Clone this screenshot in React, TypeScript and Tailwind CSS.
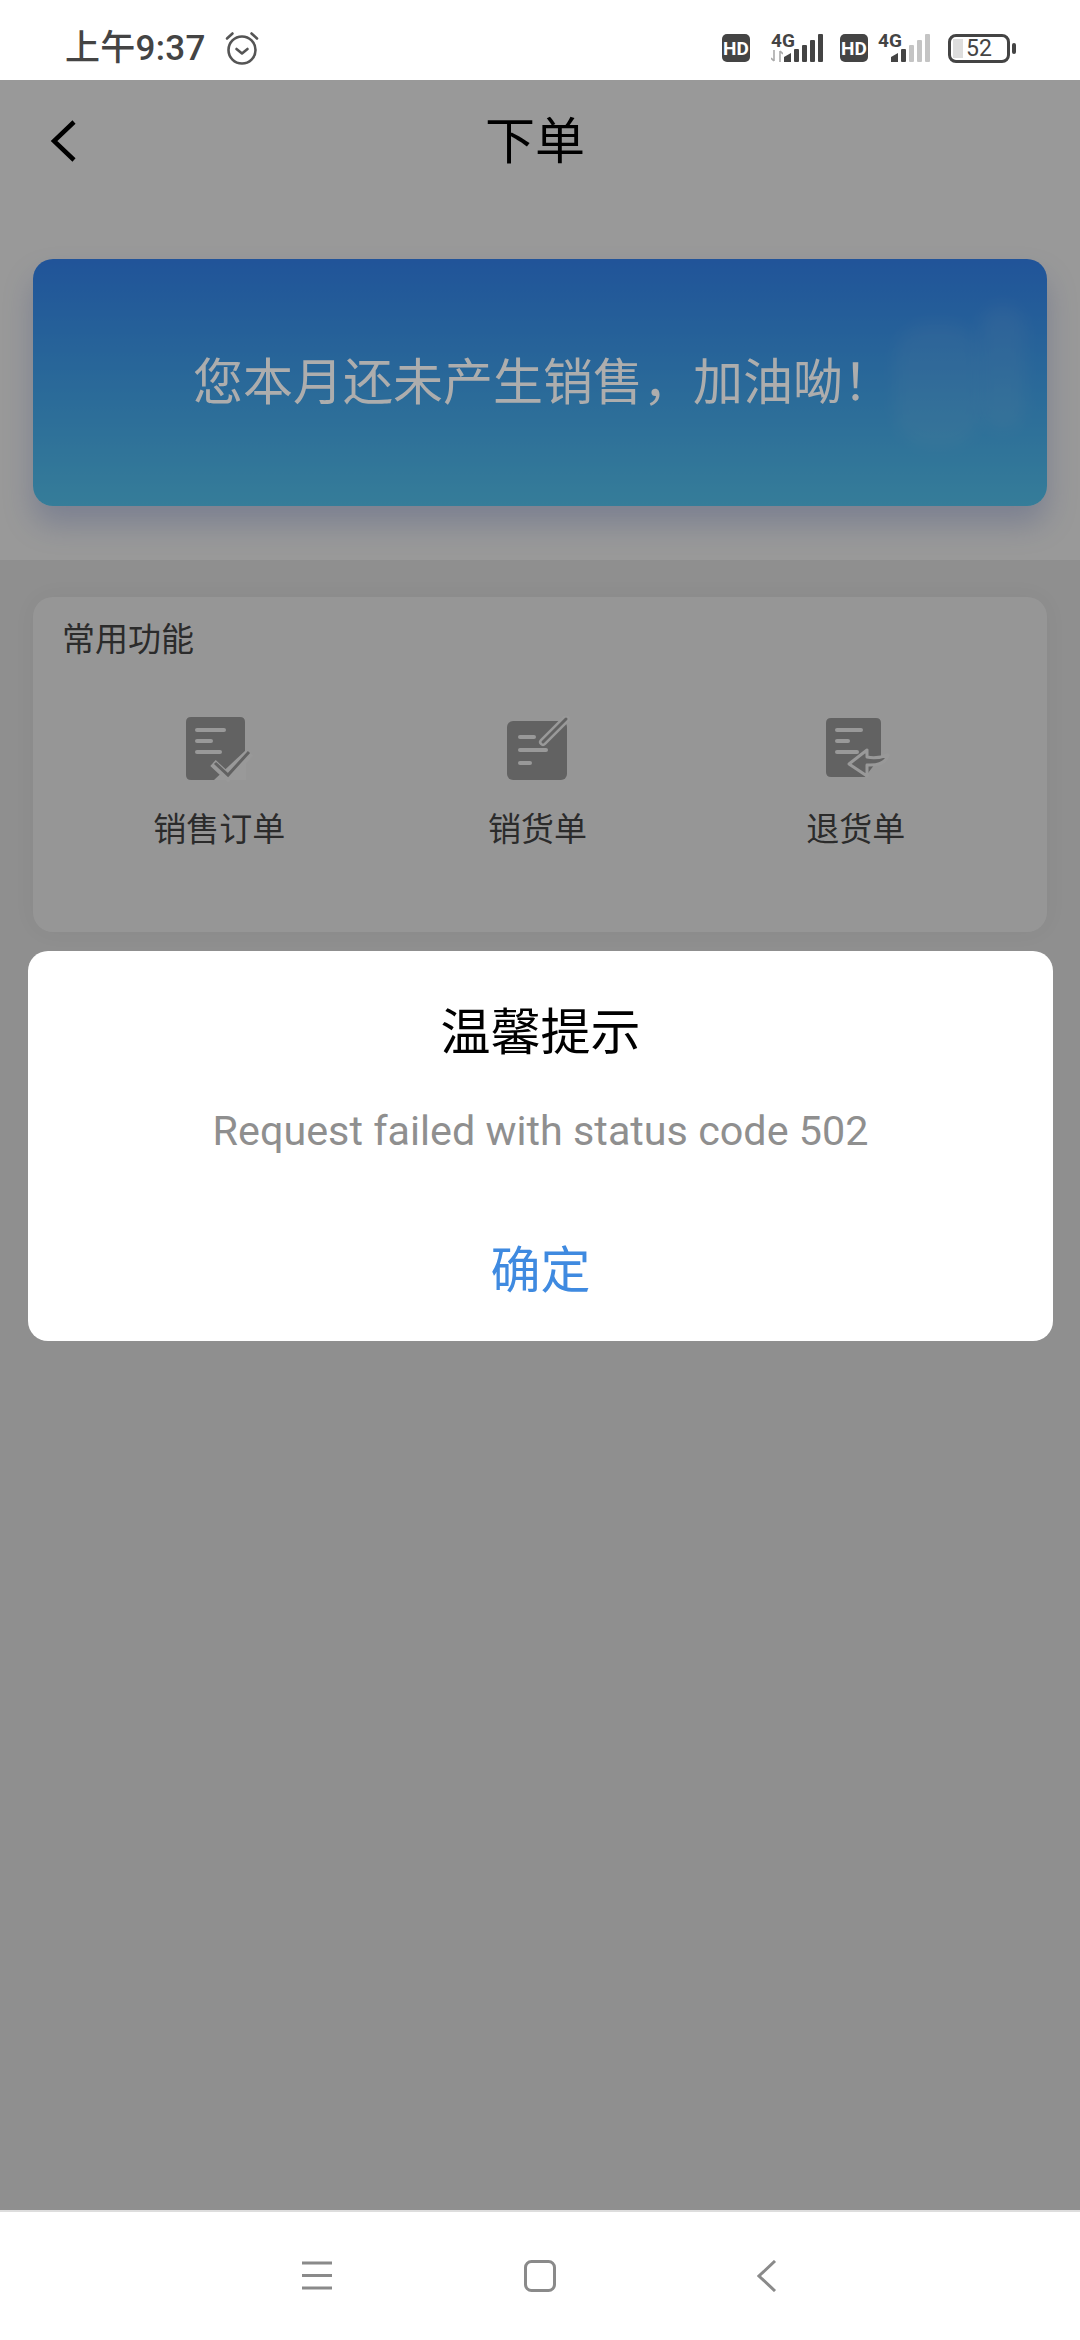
import React from 'react';

const cjk = { fontFamily: '"Noto Sans CJK SC", Roboto, sans-serif' };

const Signal = ({ active }: { active: number }) => (
  <svg width="40" height="28" viewBox="0 0 40 28">
    <path d="M0 28V23L7 19V28Z" fill={active > 0 ? '#444' : '#c4c4c4'} />
    <rect x="10" y="15" width="5" height="13" rx="1" fill={active > 1 ? '#444' : '#c4c4c4'} />
    <rect x="18" y="11" width="5" height="17" rx="1" fill={active > 2 ? '#444' : '#c4c4c4'} />
    <rect x="26" y="6" width="5" height="22" rx="1" fill={active > 3 ? '#444' : '#c4c4c4'} />
    <rect x="34" y="0" width="5" height="28" rx="1" fill={active > 4 ? '#444' : '#c4c4c4'} />
  </svg>
);

const HdBadge = () => (
  <div className="w-7 h-7 rounded-[5px] bg-[#444] flex items-center justify-center text-white text-[19px] font-bold font-['Roboto',sans-serif] leading-none">
    HD
  </div>
);

const StatusBar = () => (
  <div className="h-20 shrink-0 bg-white flex items-center pl-[65px] pr-[64px] pt-[20px] pb-[4px] justify-between">
    <div className="flex items-center gap-[19px]">
      <span className="text-[35px] tracking-[0.3px] leading-none font-medium text-[#444] font-['Roboto','Noto_Sans_CJK_SC',sans-serif]">上午9:37</span>
      <svg width="34" height="34" viewBox="0 0 34 34" fill="none" stroke="#555" strokeWidth="2.6" strokeLinecap="round" strokeLinejoin="round">
        <circle cx="17" cy="19" r="13.5" />
        <path d="M11.5 18l5.5 4.5 5.5-4.5" />
        <path d="M2 7.5 7.5 2.5" />
        <path d="M32 7.5 26.5 2.5" />
      </svg>
    </div>
    <div className="flex items-center">
      <HdBadge />
      <div className="relative w-[53px] h-7 ml-[21px] flex justify-end">
        <span className="absolute left-0 top-[-3px] text-[19px] leading-none font-bold text-[#444] font-['Roboto',sans-serif]">4G</span>
        <svg className="absolute left-0 bottom-0" width="12" height="12" viewBox="0 0 12 12" stroke="#aaa" strokeWidth="1.6" fill="none">
          <path d="M3 0V11M0 8L3 11" />
          <path d="M9 12V1M12 4L9 1" />
        </svg>
        <Signal active={5} />
      </div>
      <div className="ml-4">
        <HdBadge />
      </div>
      <div className="relative w-[53px] h-7 ml-[10px] flex justify-end">
        <span className="absolute left-0 top-[-3px] text-[19px] leading-none font-bold text-[#444] font-['Roboto',sans-serif]">4G</span>
        <Signal active={2} />
      </div>
      <div className="ml-[17px] flex items-center gap-[2px]">
        <div className="w-[62px] h-[29px] rounded-lg border-[3.5px] border-[#444] relative flex items-center justify-center">
          <div className="absolute left-[2px] top-[2px] bottom-[2px] w-[10px] bg-[#ddd]" />
          <span className="relative text-[23px] leading-none text-[#444] font-['Roboto',sans-serif]">52</span>
        </div>
        <div className="w-1 h-[11px] rounded-full bg-[#444]" />
      </div>
    </div>
  </div>
);

const DocIcon = ({ kind }: { kind: 'check' | 'pen' | 'return' }) => (
  <svg width="70" height="66" viewBox="0 0 70 66">
    {kind === 'check' && (
      <>
        <path d="M7 1H56Q61 1 61 6V64H7Q2 64 2 59V6Q2 1 7 1Z" fill="#a4a4a4" />
        <rect x="11" y="12" width="31" height="4" rx="2" fill="#fff" />
        <rect x="11" y="23" width="18" height="4" rx="2" fill="#fff" />
        <rect x="11" y="34" width="27" height="4" rx="2" fill="#fff" />
        <path d="M30 64L62 64V34Z" fill="#fff" />
        <path d="M29 47L44 61 66 37" fill="none" stroke="#fff" strokeWidth="8" />
        <path d="M31 47L44 59 65 36" fill="none" stroke="#a4a4a4" strokeWidth="3" />
      </>
    )}
    {kind === 'pen' && (
      <>
        <rect x="5" y="5" width="60" height="59" rx="6" fill="#a4a4a4" />
        <rect x="16" y="19" width="18" height="4" rx="2" fill="#fff" />
        <rect x="16" y="32" width="30" height="4" rx="2" fill="#fff" />
        <rect x="16" y="45" width="14" height="4" rx="2" fill="#fff" />
        <path d="M41 26L64 3" stroke="#fff" strokeWidth="8" strokeLinecap="round" />
        <path d="M41 26L64 3" stroke="#a4a4a4" strokeWidth="3" strokeLinecap="round" />
      </>
    )}
    {kind === 'return' && (
      <>
        <path d="M10 2H55Q60 2 60 7V40L44 61H10Q5 61 5 56V7Q5 2 10 2Z" fill="#a4a4a4" />
        <rect x="14" y="12" width="28" height="4" rx="2" fill="#fff" />
        <rect x="14" y="23" width="15" height="4" rx="2" fill="#fff" />
        <rect x="14" y="34" width="24" height="4" rx="2" fill="#fff" />
        <path d="M28 48L46 34V41Q56 43 67 39Q64 50 46 49V60Z" fill="#a4a4a4" stroke="#fff" strokeWidth="3" strokeLinejoin="round" />
      </>
    )}
  </svg>
);

const ACTIONS = [
  { label: '销售订单', kind: 'check' as const },
  { label: '销货单', kind: 'pen' as const },
  { label: '退货单', kind: 'return' as const },
];

const NavBar = () => (
  <div className="h-[130px] shrink-0 bg-white border-t-2 border-[#ddd] flex items-start pt-[48px] pl-[302px]">
    <svg width="30" height="32" viewBox="0 0 30 32" stroke="#8a8a8a" strokeWidth="3" fill="none">
      <path d="M0 3H30M0 15.5H30M0 28H30" />
    </svg>
    <svg className="ml-[192px]" width="32" height="32" viewBox="0 0 32 32" stroke="#8a8a8a" strokeWidth="3" fill="none">
      <rect x="1.5" y="1.5" width="29" height="29" rx="6" />
    </svg>
    <svg className="ml-[201px]" width="20" height="32" viewBox="0 0 20 32" stroke="#8a8a8a" strokeWidth="3" fill="none">
      <path d="M18 1L2 16L18 31" />
    </svg>
  </div>
);

export default function App() {
  return (
    <div className="w-[1080px] h-[2340px] flex flex-col overflow-hidden" style={cjk}>
      <StatusBar />

      <div className="flex-1 relative bg-[#eeeeee]">
        {/* Page under the mask */}
        <div className="bg-white h-[480px]">
          <div className="h-[120px] relative flex items-center justify-center">
            <svg className="absolute left-[50px] top-[40px]" width="26" height="42" viewBox="0 0 26 42" fill="none" stroke="#000" strokeWidth="4.5">
              <path d="M24 2L4 21L24 40" />
            </svg>
            <span className="text-[50px] leading-none text-black mr-[10px] mt-[-6px]">下单</span>
          </div>
          <div className="mx-[33px] mt-[59px] h-[247px] rounded-[20px] bg-gradient-to-b from-[#378cff] to-[#5ad0ff] shadow-[0_18px_30px_rgba(60,90,200,0.25)] flex items-center justify-center relative overflow-hidden">
            <span className="relative z-10 text-[50px] leading-none text-[#adadad] mt-[-9px] ml-[6px]">您本月还未产生销售，加油呦！</span>
            <div className="absolute right-[67px] top-[64px] w-[85px] h-[124px] rounded-[36px] bg-white/[0.07] blur-sm" />
            <div className="absolute right-[22px] top-[46px] w-[45px] h-[125px] rounded-full bg-white/[0.08] blur-sm" />
          </div>
        </div>

        <div className="mx-[33px] mt-[37px] h-[335px] rounded-[20px] bg-[#fbfbfb] shadow-[0_0_24px_rgba(0,0,0,0.04)] px-[29px] pt-[22px]">
          <div className="text-[33px] leading-[36px] text-[#484848]">常用功能</div>
          <div className="grid grid-cols-3 mt-[61px] ml-[-2px] mr-[3px]">
            {ACTIONS.map(a => (
              <div key={a.label} className="flex flex-col items-center">
                <DocIcon kind={a.kind} />
                <span className="text-[33px] leading-none text-[#484848] mt-[29px]">{a.label}</span>
              </div>
            ))}
          </div>
        </div>

        {/* Mask + dialog */}
        <div className="absolute inset-0 bg-black/40 flex items-center justify-center">
          <div className="w-[1025px] h-[390px] ml-[1px] mt-[1px] rounded-[20px] bg-white flex flex-col items-center">
            <div className="text-[50px] leading-none text-black mt-[52px]">温馨提示</div>
            <div className="text-[41.3px] leading-none text-[#8f8f8f] mt-[58px] font-['Roboto',sans-serif]">Request failed with status code 502</div>
            <div className="text-[50px] leading-none text-[#3f8ae0] mt-[89px]">确定</div>
          </div>
        </div>
      </div>

      <NavBar />
    </div>
  );
}
